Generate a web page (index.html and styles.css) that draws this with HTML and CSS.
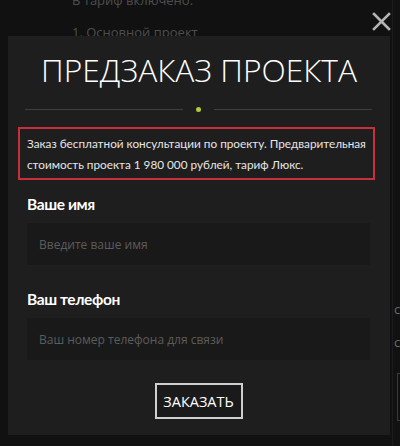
FILE: index.html
```html
<!DOCTYPE html>
<html lang="ru">
<head>
<meta charset="utf-8">
<link rel="stylesheet" href="styles.css">
</head>
<body>
<div class="backdrop">
  <p class="bg-line bg-first">В тариф включено:</p>
  <p class="bg-line">1. Основной проект</p>
  <div class="bg-side">
    <span class="bg-char bg-c1">с</span>
    <span class="bg-char bg-c2">с</span>
    <span class="bg-box"></span>
  </div>
</div>

<button class="close" aria-label="Закрыть">
  <svg width="19" height="19" viewBox="0 0 19 19"><path d="M2 2 L17 17 M17 2 L2 17" stroke="#b4b4b4" stroke-width="2.6" stroke-linecap="square"/></svg>
</button>

<div class="modal">
  <h1 class="title">ПРЕДЗАКАЗ ПРОЕКТА</h1>
  <div class="divider"><span class="line"></span><span class="dot"></span><span class="line"></span></div>
  <p class="notice">Заказ бесплатной консультации по проекту. Предварительная<br>стоимость проекта 1 980 000 рублей, тариф Люкс.</p>
  <form class="form">
    <label class="label">Ваше имя</label>
    <input class="field" type="text" placeholder="Введите ваше имя">
    <label class="label label-gap">Ваш телефон</label>
    <input class="field" type="text" placeholder="Ваш номер телефона для связи">
    <div class="actions"><button type="button" class="submit">ЗАКАЗАТЬ</button></div>
  </form>
</div>
</body>
</html>
```

FILE: styles.css
```css
html, body {
  margin: 0;
  padding: 0;
}
body {
  width: 400px;
  height: 446px;
  overflow: hidden;
  position: relative;
  background: #111111;
  font-family: "Open Sans", "Liberation Sans", sans-serif;
}
.backdrop {
  padding-left: 72px;
  padding-top: 0;
}
.bg-line {
  margin: 0;
  color: #4e4e4e;
  font-size: 13px;
  line-height: 17px;
}
.bg-first {
  margin-top: -8px;
  margin-bottom: 15px;
}
.bg-side {
  position: absolute;
  left: 392px;
  top: 0;
  width: 8px;
  height: 446px;
  border-left: 1px solid #1c1c1c;
}
.bg-char {
  position: absolute;
  left: 1px;
  color: #6a6a6a;
  font-size: 13px;
}
.bg-c1 { top: 300px; }
.bg-c2 { top: 333px; }
.bg-box {
  position: absolute;
  left: 4px;
  top: 373px;
  width: 10px;
  height: 46px;
  border: 1px solid #3a3a3a;
}
.close {
  position: absolute;
  left: 372px;
  top: 12px;
  width: 19px;
  height: 19px;
  padding: 0;
  border: 0;
  background: none;
  display: block;
}
.close svg { display: block; }
.modal {
  position: absolute;
  left: 8px;
  top: 36px;
  width: 382px;
  height: 399px;
  box-sizing: border-box;
  background: #1e1e1e;
  padding-top: 14px;
}
.title {
  margin: 0;
  font-size: 31.7px;
  line-height: 40px;
  font-weight: 300;
  color: #ffffff;
  text-align: center;
  letter-spacing: 0;
}
.divider {
  display: flex;
  align-items: center;
  margin: 17px 18px 0 17px;
  gap: 13px;
  height: 5px;
}
.line {
  flex: 1;
  height: 1px;
  background: #3e3e3e;
}
.dot {
  width: 5px;
  height: 5px;
  border-radius: 50%;
  background: #b8c83c;
}
.notice {
  margin: 15px 15px 0 10px;
  border: 2px solid #c7303b;
  padding: 4px 2px 3px 7px;
  color: #e6e6e6;
  font-family: Lato, "Open Sans", sans-serif;
  font-size: 11.75px;
  line-height: 21px;
  white-space: nowrap;
}
.form {
  display: flex;
  flex-direction: column;
  padding: 0 20px 0 19px;
  margin: 0;
}
.label {
  margin-top: 14px;
  color: #ffffff;
  font-family: Lato, "Open Sans", sans-serif;
  font-size: 15.5px;
  letter-spacing: -0.4px;
  line-height: 20px;
  font-weight: 700;
  margin-bottom: 9px;
}
.label-gap {
  margin-top: 24px;
}
.field {
  height: 42px;
  box-sizing: border-box;
  border: 0;
  background: #191919;
  padding: 0 12px;
  font-family: "Open Sans", "Liberation Sans", sans-serif;
  font-size: 12px;
  color: #ddd;
  outline: none;
}
.field::placeholder {
  color: #5c5c5c;
}
.actions {
  display: flex;
  justify-content: center;
  margin-top: 23px;
}
.submit {
  width: 88px;
  height: 36px;
  box-sizing: border-box;
  border: 2px solid #cfcfcf;
  background: #1a1a1a;
  color: #ffffff;
  font-family: "Open Sans", "Liberation Sans", sans-serif;
  font-size: 14.5px;
  padding: 0;
}
```
